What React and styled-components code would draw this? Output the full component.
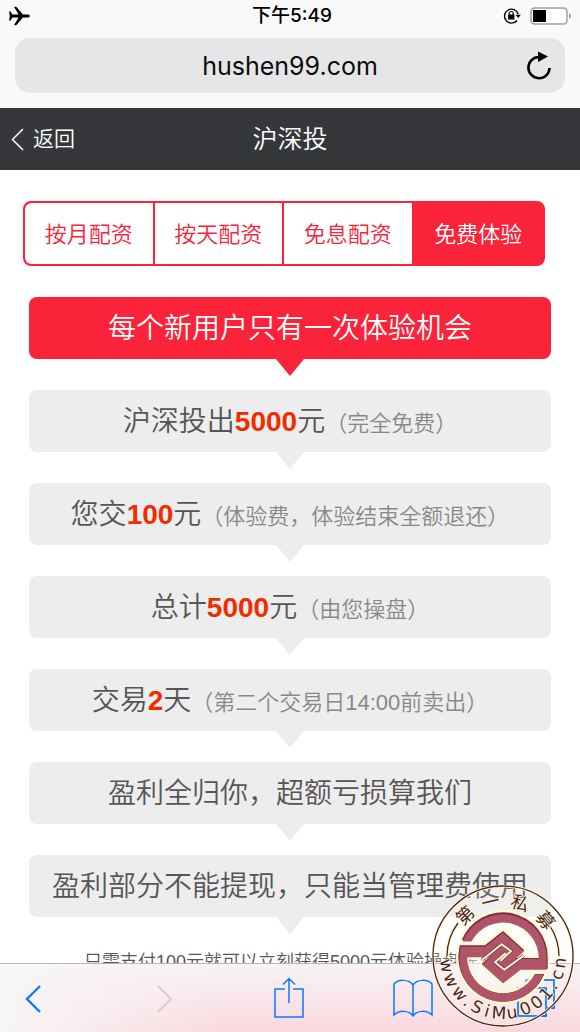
import React from 'react';
import styled, { createGlobalStyle } from 'styled-components';

const Global = createGlobalStyle`
  * { box-sizing: border-box; }
  body { margin: 0; background: #fff; font-family: "Liberation Sans", "Noto Sans CJK SC", sans-serif; font-weight: 350; }
  button { font: inherit; margin: 0; padding: 0; border: 0; background: none; cursor: pointer; }
  svg { display: block; flex: none; }
`;

const Screen = styled.div`
  position: relative;
  height: 100vh;
  display: flex;
  flex-direction: column;
  overflow: hidden;
`;
const BrowserTop = styled.header`
  flex: none;
  background: #f9f9f9;
  padding-bottom: 15px;
`;
const StatusBar = styled.div`
  height: 38px;
  padding: 0 4px 6px 8px;
  display: grid;
  grid-template-columns: 1fr auto 1fr;
  align-items: center;
`;
const Clock = styled.time`
  font: 500 19px/32px Inter, "Noto Sans CJK SC", sans-serif;
  color: #000;
`;
const StatusIcons = styled.div`
  display: flex;
  justify-content: flex-end;
  align-items: center;
  gap: 9px;
  padding-right: 4px;
`;
const AddressBar = styled.div`
  height: 55px;
  margin: 0 15px;
  padding: 0 12px;
  border-radius: 15px;
  background: #e6e6e8;
  display: grid;
  grid-template-columns: 28px 1fr 28px;
  align-items: center;
`;
const Address = styled.span`
  text-align: center;
  font: 400 25px/32px Inter, sans-serif;
  color: #0c0c0c;
`;
const TitleBar = styled.nav`
  flex: none;
  height: 62px;
  padding: 0 10px;
  background: #36373b;
  color: #fff;
  display: grid;
  grid-template-columns: 1fr auto 1fr;
  align-items: center;
`;
const BackLink = styled.a`
  display: flex;
  align-items: center;
  gap: 8px;
  color: inherit;
  text-decoration: none;
  font-size: 21px;
  line-height: 32px;
`;
const Title = styled.h1`
  margin: 0;
  font-size: 25px;
  line-height: 32px;
  font-weight: 350;
`;
const Main = styled.main`
  flex: 1;
  min-height: 0;
  overflow: hidden;
  padding: 31px 29px 0;
`;
const Tabs = styled.div`
  display: grid;
  grid-template-columns: repeat(4, 1fr);
  height: 65px;
  margin: 0 6px 31px -6px;
  border: 2px solid #f9233a;
  border-radius: 8px;
  background: #f9233a;
  overflow: hidden;
`;
const Tab = styled.button`
  && {
    padding-bottom: 3px;
    font-size: 22px;
    color: ${(p) => (p.$active ? '#fff' : '#f9233a')};
    background: ${(p) => (p.$active ? '#f9233a' : '#fff')};
    border-radius: ${(p) => (p.$first ? '6px 0 0 6px' : '0')};
    border-right: ${(p) => (p.$active ? '0' : '2px solid #f9233a')};
  }
`;
const Steps = styled.ul`
  list-style: none;
  margin: 0;
  padding: 0;
  display: grid;
  gap: 31px;
`;
const Step = styled.li`
  position: relative;
  height: 62px;
  border-radius: 8px;
  background: ${(p) => (p.$lead ? '#f9233a' : '#ededed')};
  color: ${(p) => (p.$lead ? '#fff' : '#555')};
  font-size: 28px;
  line-height: 63px;
  text-align: center;
  white-space: nowrap;
  &::after {
    content: "";
    position: absolute;
    top: 100%;
    left: 50%;
    margin-left: -14px;
    border: 14px solid transparent;
    border-top: 17px solid ${(p) => (p.$lead ? '#f9233a' : '#ededed')};
    border-bottom: 0;
  }
`;
const Amount = styled.strong`
  color: #f12c00;
  font-weight: 700;
`;
const Note = styled.small`
  font-size: 22px;
  color: #888;
`;
const Hint = styled.p`
  margin: 31px 0 0;
  font-size: 18px;
  line-height: 28px;
  text-align: center;
  white-space: nowrap;
  color: #555;
`;
const Toolbar = styled.footer`
  flex: none;
  height: 69px;
  padding: 0 24px 0 22px;
  border-top: 1px solid #b9b5b7;
  background: linear-gradient(90deg, #f8f6f6 0%, rgba(248, 246, 246, 0) 40%), linear-gradient(#f8f3f5, #f9d8de);
  display: grid;
  grid-template-columns: 81fr 124fr 124fr 124fr 81fr;
  justify-items: center;
  align-items: center;
`;
const ToolButton = styled.button`
  opacity: ${(p) => (p.disabled ? 0.12 : 1)};
  &:first-child { justify-self: start; }
  &:last-child { justify-self: end; }
`;
const Seal = styled.svg`
  position: absolute;
  right: 6px;
  bottom: 5px;
`;

const steps = [
  { text: '每个新用户只有一次体验机会', lead: true },
  { text: '沪深投出', amount: '5000', unit: '元', note: '（完全免费）' },
  { text: '您交', amount: '100', unit: '元', note: '（体验费，体验结束全额退还）' },
  { text: '总计', amount: '5000', unit: '元', note: '（由您操盘）' },
  { text: '交易', amount: '2', unit: '天', note: '（第二个交易日14:00前卖出）' },
  { text: '盈利全归你，超额亏损算我们' },
  { text: '盈利部分不能提现，只能当管理费使用' },
];

const line = { fill: 'none', stroke: '#0a7aff', strokeWidth: 2 };

// Clockwise degrees from the top of the seal for each character.
const sealTop = [['第', -43], ['一', -13], ['私', 18], ['募', 50]];
const sealBottom = [
  ['w', 260], ['w', 245], ['w', 229], ['.', 218], ['S', 207], ['i', 196], ['M', 184],
  ['u', 171], ['0', 157], ['0', 144], ['1', 131], ['.', 121], ['c', 109], ['n', 97],
];

const emblem =
  'M-124 -51A134 134 0 0 1 134 3V36H54L0 78L-64 20L-38 -2H-110A110 110 0 0 0 97 51H124A134 134 0 0 1 -134 -3L-130 -35H-54L0 -78L64 -20L38 3H110A110 110 0 0 0 -97 -51Z';

function SealMark() {
  return (
    <Seal width="142" height="142" viewBox="-71 -71 142 142" aria-label="第一私募 www.SiMu001.cn">
      <circle r="70" fill="#fffff0" fillOpacity="0.12" />
      <circle r="70" fill="none" stroke="#fffbd6" strokeWidth="3" />
      <circle r="70" fill="none" stroke="#4a2326" strokeWidth="1.3" />
      <path d="M-56 0A56 56 0 0 1 -45 -33M47 -30A56 56 0 0 1 56 0" fill="none" stroke="#fffbd6" strokeWidth="4" />
      <path d="M-56 0A56 56 0 0 1 -45 -33M47 -30A56 56 0 0 1 56 0" fill="none" stroke="#4a2326" strokeWidth="1.3" />
      <g transform="translate(0 1) scale(.3333)">
        <circle r="112" fill="#fffff2" fillOpacity="0.4" />
        <path d={emblem} fill="none" stroke="#fffbd0" strokeWidth="14" strokeLinejoin="round" />
        <path d={emblem} fill="#7c2f41" />
        <path d={emblem} fill="#b0546a" transform="translate(0 3) scale(.975)" />
        <path d="M-62 8L-4 -38L24 -18L-8 12M62 -4L4 38L-24 16L8 -12" fill="none" stroke="#7c2f41" strokeWidth="10" />
        <path d="M-62 8L-4 -38L24 -18L-8 12M62 -4L4 38L-24 16L8 -12" fill="none" stroke="#fff6cf" strokeWidth="6" />
      </g>
      <g fill="#4a2326" stroke="#fffbdc" strokeWidth="1.5" paintOrder="stroke" textAnchor="middle">
        {sealTop.map(([c, a]) => (
          <text key={a} y="-49" transform={`rotate(${a})`} fontSize="18" fontWeight="400" fontFamily="'Noto Sans CJK SC', sans-serif">{c}</text>
        ))}
        {sealBottom.map(([c, a]) => (
          <text key={a} y="63" transform={`rotate(${a - 180})`} fontSize="17" fontWeight="400" fontFamily="'DejaVu Sans', sans-serif">{c}</text>
        ))}
      </g>
    </Seal>
  );
}

export default function App() {
  return (
    <Screen>
      <Global />
      <BrowserTop>
        <StatusBar>
          <svg width="22" height="20" viewBox="0 0 22 20"><path d="M1 5.500h1.500l2 3h6L6 .8h2.200L15 8.400h5.200a1.600 1.600 0 0 1 0 3.200H15L8.200 19.200H6l4.500-7.700h-6l-2 3H1l.8-4.500Z" /></svg>
          <Clock>下午5:49</Clock>
          <StatusIcons>
            <svg width="18" height="18" viewBox="0 0 18 18">
              <path d="M14 13.500A7 7 0 1 1 15.200 7" fill="none" stroke="#000" strokeWidth="1.400" />
              <path d="M12.500 7.800h5.300L15.200 11Z" />
              <rect x="5" y="7.500" width="6.400" height="5" rx=".6" />
              <path d="M6.200 8V6.500a2 2 0 0 1 4 0V8" fill="none" stroke="#000" strokeWidth="1.200" />
            </svg>
            <svg width="42" height="18" viewBox="0 0 42 18">
              <rect x="1" y="1" width="36" height="16" rx="3.500" fill="#fff" stroke="#a0a0a0" strokeWidth="1.500" />
              <rect x="3" y="3" width="13" height="12" />
              <path d="M39 6q2 1 2 3t-2 3Z" fill="#a0a0a0" />
            </svg>
          </StatusIcons>
        </StatusBar>
        <AddressBar>
          <span />
          <Address>hushen99.com</Address>
          <button aria-label="刷新">
            <svg width="26" height="30" viewBox="0 0 26 30">
              <path d="M14 6A10.600 10.600 0 1 0 24.600 17" fill="none" stroke="#000" strokeWidth="2.600" />
              <path d="M13 .5L23 5.500L13 11Z" />
            </svg>
          </button>
        </AddressBar>
      </BrowserTop>
      <TitleBar>
        <BackLink href="#back">
          <svg width="15" height="24" viewBox="0 0 15 24"><path d="M13 2L2.500 12.500L13 23" fill="none" stroke="#fff" strokeWidth="1.500" /></svg>
          返回
        </BackLink>
        <Title>沪深投</Title>
      </TitleBar>
      <Main>
        <Tabs>
          <Tab $first>按月配资</Tab>
          <Tab>按天配资</Tab>
          <Tab>免息配资</Tab>
          <Tab $active>免费体验</Tab>
        </Tabs>
        <Steps>
          {steps.map((s) => (
            <Step key={s.text} $lead={s.lead}>
              {s.text}
              {s.amount && <Amount>{s.amount}</Amount>}
              {s.unit}
              {s.note && <Note>{s.note}</Note>}
            </Step>
          ))}
        </Steps>
        <Hint>只需支付100元就可以立刻获得5000元体验操盘账户</Hint>
      </Main>
      <Toolbar>
        <ToolButton aria-label="后退">
          <svg width="20" height="30" viewBox="0 0 20 30"><path d="M18 3L5 16L18 29" {...line} strokeWidth="2.400" /></svg>
        </ToolButton>
        <ToolButton aria-label="前进" disabled>
          <svg width="20" height="30" viewBox="0 0 20 30"><path d="M3 3L16 16L3 29" fill="none" stroke="#000" strokeWidth="2" /></svg>
        </ToolButton>
        <ToolButton aria-label="分享">
          <svg width="32" height="42" viewBox="0 0 32 42"><path d="M12 12H2V40H30V12H20M16 26V1.500M10 7.500L16 1.500L22 7.500" {...line} strokeWidth="1.500" /></svg>
        </ToolButton>
        <ToolButton aria-label="书签">
          <svg width="40" height="38" viewBox="0 0 40 38"><path d="M20 6C16 0 5 0 1 5V36C6 31 16 31 20 37C24 31 34 31 39 36V5C35 0 24 0 20 6V37" {...line} strokeWidth="1.500" /></svg>
        </ToolButton>
        <ToolButton aria-label="标签页">
          <svg width="40" height="40" viewBox="0 0 40 40"><path d="M2 10H30V38H2ZM10 10V2H38V30H30" {...line} /></svg>
        </ToolButton>
      </Toolbar>
      <SealMark />
    </Screen>
  );
}
